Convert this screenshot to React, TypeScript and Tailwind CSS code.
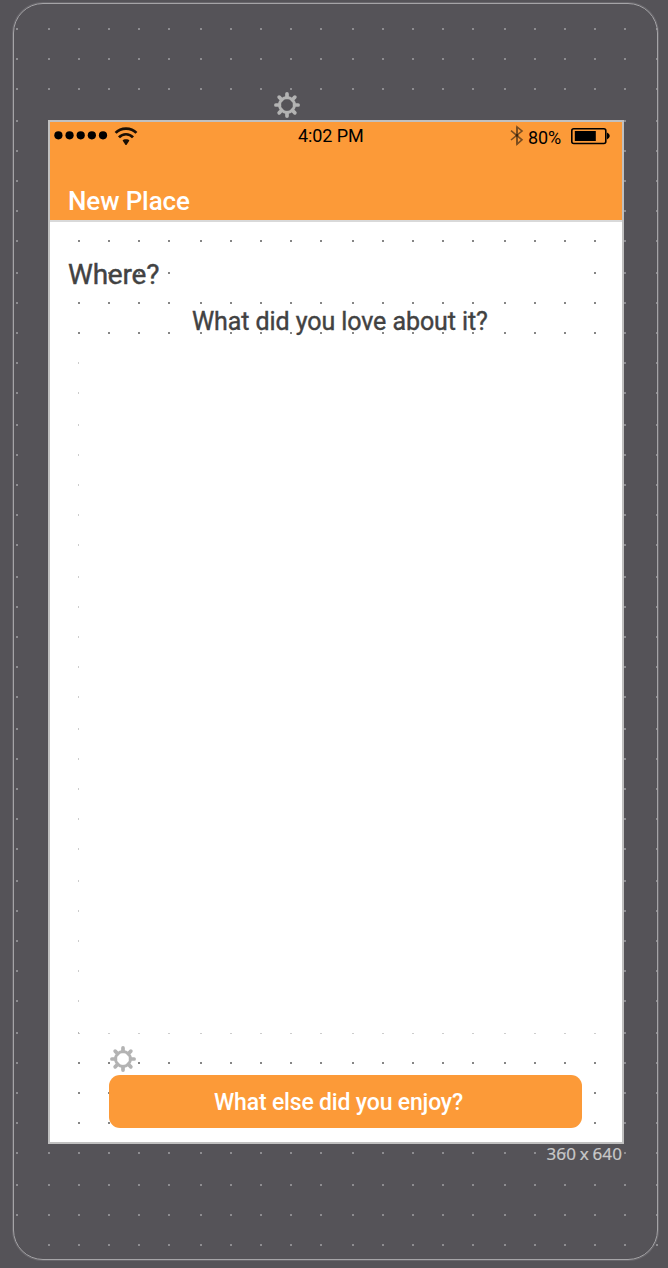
import React from "react";

const steps = (from: number, to: number, first: number) => {
  const out: number[] = [];
  for (let base = first; base <= to; base += 152) {
    for (let i = 0; i < 5; i++) {
      const v = base + i * 30;
      if (v >= from && v <= to) out.push(v);
    }
  }
  return out;
};

const COLS = [16, ...steps(48, 656, 48)];
const ROWS = [28, 58, 88, ...steps(120, 1244, 120)];

function CanvasDots() {
  return (
    <svg className="pointer-events-none absolute inset-0" width="668" height="1268" shapeRendering="crispEdges">
      {ROWS.map((y) =>
        COLS.filter((x) => !(x === 16 && y === 1244)).map((x) => (
          <rect key={`${x}-${y}`} x={x} y={y} width="2" height="2" fill="#8d8c90" />
        )),
      )}
    </svg>
  );
}

const INNER = COLS.filter((x) => x >= 78 && x <= 594);

function ScreenDots() {
  const left = 50;
  const top = 222;
  return (
    <svg className="pointer-events-none absolute inset-0" width="572" height="920" shapeRendering="crispEdges">
      {[240, 302, 332, 1062].map((y) =>
        INNER.map((x) => <rect key={`${x}-${y}`} x={x - left} y={y - top} width="2" height="2" fill="#868686" />),
      )}
      {[108, 138, 168, 594].map((x) => (
        <rect key={x} x={x - left} y={272 - top} width="2" height="2" fill="#868686" />
      ))}
      {ROWS.filter((y) => y >= 362 && y <= 1002).map((y) => (
        <rect key={y} x={78 - left} y={y - top} width="1" height="2" fill="#cdcdcd" />
      ))}
      {INNER.map((x) => (
        <rect key={x} x={x - left} y={1033 - top} width="2" height="1" fill="#cdcdcd" />
      ))}
      <rect x={78 - left} y={1032 - top} width="1" height="2" fill="#b8b8b8" />
      {[1092, 1122].map((y) =>
        [78, 108, 594].map((x) => (
          <rect key={`${x}-${y}`} x={x - left} y={y - top} width="2" height="2" fill="#868686" />
        )),
      )}
    </svg>
  );
}

function Gear({ className }: { className: string }) {
  return (
    <svg className={className} width="26" height="26" viewBox="0 0 26 26" fill="none" stroke="#b3b3b3">
      <circle cx="13" cy="13" r="7.5" strokeWidth="2.9" />
      {[0, 45, 90, 135, 180, 225, 270, 315].map((a) => (
        <path key={a} d="M13 5.5V1.9" strokeWidth="3.7" strokeLinecap="round" transform={`rotate(${a} 13 13)`} />
      ))}
    </svg>
  );
}

function StatusBar() {
  return (
    <div className="relative flex h-7 items-center text-[18px] leading-7 text-black">
      <svg className="ml-1" width="54" height="12" viewBox="0 0 54 12">
        {[0, 1, 2, 3, 4].map((i) => (
          <circle key={i} cx={4.4 + i * 11.15} cy="5.3" r="4.1" />
        ))}
      </svg>
      <svg className="ml-[6px]" width="24" height="20" viewBox="0 0 24 20" fill="none" stroke="#1a0f04" strokeWidth="2.7">
        <path d="M1.6 6.9C6.8 1.2 17.2 1.2 22.4 6.9" />
        <path d="M5 11.4C8.8 7.2 15.2 7.2 19 11.4" />
        <path d="M8.6 14.6C9.4 12.7 14.6 12.7 15.4 14.6L12.8 18.4Q12 19.4 11.2 18.4Z" fill="#1a0f04" stroke="none" />
      </svg>
      <span className="ml-[160px] w-[67px] whitespace-nowrap tracking-[-0.1px]">4:02 PM</span>
      <svg className="ml-[145px]" width="14" height="22" viewBox="0 0 14 22" fill="none" stroke="#7a4d20">
        <path d="M1 5.6L12 14.8L7 19.2V2L12 6L1 15" strokeWidth="1.6" />
        <path d="M7 2V19.6" strokeWidth="1.8" />
        <circle cx="7" cy="10.4" r="1.3" fill="#3a230c" stroke="none" />
      </svg>
      <span className="ml-1 mt-[3px] w-[34px] whitespace-nowrap tracking-[-0.1px]">80%</span>
      <svg className="ml-[8px] shrink-0" width="40" height="18" viewBox="0 0 40 18">
        <rect x="1.8" y="1.7" width="34" height="14.8" rx="2" fill="none" stroke="#000" strokeWidth="1.6" />
        <rect x="4.8" y="4" width="21" height="10" />
        <path d="M37 5.6Q39.8 7 39.8 9T37 12.4Z" />
      </svg>
    </div>
  );
}

export default function App() {
  return (
    <div className="relative h-[1268px] w-[668px] overflow-hidden bg-[#555358] pl-[13px] pt-[3px] font-['Roboto',sans-serif]">
      <CanvasDots />
      <div className="relative h-[1257px] w-[645px] rounded-[30px] border border-[#a5a4a7] pl-[34px] pt-[116px] shadow-[0_0_0_1px_#69676c]">
        <Gear className="absolute left-[260px] top-[88px]" />
        <main className="flex h-[1024px] w-[576px] flex-col border-2 border-[#c0c0c0] bg-white">
          <header className="flex h-[100px] shrink-0 flex-col justify-between border-b-2 border-[#d9d9d9] bg-[#fc9a38]">
            <StatusBar />
            <h1 className="mb-[3px] pl-[18px] text-[26px] leading-8 font-medium tracking-[-0.12px] text-white">New Place</h1>
          </header>
          <section className="relative flex grow flex-col">
            <ScreenDots />
            <h2 className="relative mt-[35px] pl-[18px] text-[28px] leading-9 tracking-[-0.2px] text-[#424242] [-webkit-text-stroke:0.4px_#424242]">
              Where?
            </h2>
            <p className="relative mt-[11px] whitespace-nowrap pl-[142px] text-[25px] leading-9 tracking-[-0.08px] text-[#424242] [-webkit-text-stroke:0.4px_#424242]">
              What did you love about it?
            </p>
            <Gear className="absolute left-[60px] top-[824px]" />
            <button className="relative mt-auto mb-[14px] ml-[59px] h-[53px] w-[473px] rounded-[11px] bg-[#fc9a38] pt-1 pr-[14px] text-[23px] font-medium tracking-[-0.18px] text-white">
              What else did you enjoy?
            </button>
          </section>
        </main>
        <p className="w-[574px] text-right font-['Noto_Sans',sans-serif] text-[17px] leading-5 tracking-[0.1px] text-[#c8c8c8] [-webkit-text-stroke:0.2px_#c8c8c8] [word-spacing:-0.8px]">
          360 x 640
        </p>
      </div>
    </div>
  );
}
